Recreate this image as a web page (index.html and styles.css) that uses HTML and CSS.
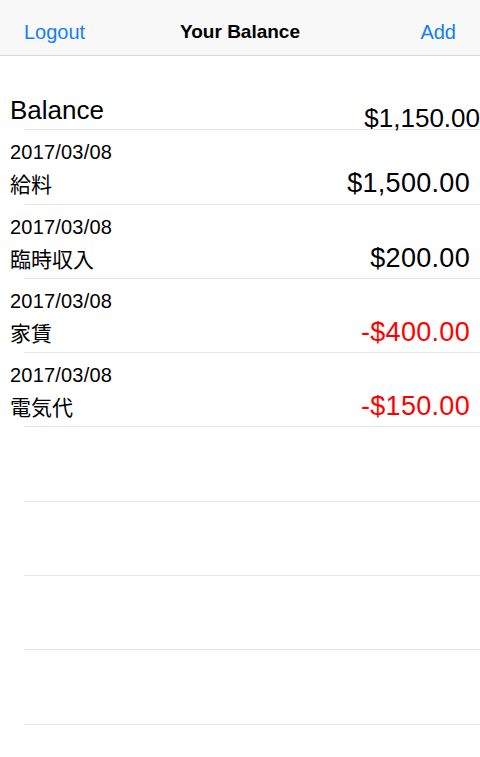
FILE: index.html
```html
<!DOCTYPE html>
<html lang="ja">
<head>
    <meta charset="UTF-8">
    <title>Your Balance</title>
    <link rel="stylesheet" href="styles.css">
</head>
<body>

<!-- Barra de navegação -->
<header class="navbar">
    <a class="nav-btn nav-left">Logout</a>
    <span class="nav-title">Your Balance</span>
    <a class="nav-btn nav-right">Add</a>
</header>

<!-- Lista -->
<div class="lista">
    <div class="linha linha-saldo">
        <span class="saldo-label">Balance</span>
        <span class="saldo-valor">$1,150.00</span>
    </div>

    <div class="linha">
        <div class="data">2017/03/08</div>
        <div class="detalhe">
            <span class="nome">給料</span>
            <span class="valor">$1,500.00</span>
        </div>
    </div>

    <div class="linha">
        <div class="data">2017/03/08</div>
        <div class="detalhe">
            <span class="nome">臨時収入</span>
            <span class="valor">$200.00</span>
        </div>
    </div>

    <div class="linha">
        <div class="data">2017/03/08</div>
        <div class="detalhe">
            <span class="nome">家賃</span>
            <span class="valor negativo">-$400.00</span>
        </div>
    </div>

    <div class="linha">
        <div class="data">2017/03/08</div>
        <div class="detalhe">
            <span class="nome">電気代</span>
            <span class="valor negativo">-$150.00</span>
        </div>
    </div>

    <!-- linhas vazias -->
    <div class="linha"></div>
    <div class="linha"></div>
    <div class="linha"></div>
    <div class="linha"></div>
</div>

</body>
</html>
```

FILE: styles.css
```css
* {
    box-sizing: border-box;
}

body {
    margin: 0;
    font-family: 'Liberation Sans', Arial, 'Noto Sans CJK JP', sans-serif;
    color: #000;
    background: white;
}

.navbar {
    height: 56px;
    padding-top: 20px;
    background: #f8f8f8;
    border-bottom: 1px solid #d9d9d9;
    display: grid;
    grid-template-columns: 1fr auto 1fr;
    align-items: start;
}

.nav-btn {
    color: #147efb;
    font-size: 20px;
    line-height: 24px;
}

.nav-left {
    padding-left: 24px;
}

.nav-right {
    text-align: right;
    padding-right: 24px;
}

.nav-title {
    font-size: 19px;
    font-weight: bold;
    line-height: 24px;
}

.linha {
    height: 74.3px;
    padding: 10px 10px 0 10px;
    background: linear-gradient(#e6e6e6, #e6e6e6) no-repeat;
    background-position: 24px 100%;
    background-size: calc(100% - 24px) 1px;
}

.linha-saldo {
    display: flex;
    justify-content: space-between;
    align-items: flex-start;
    padding: 0 0 0 10px;
}

.saldo-label {
    font-size: 26px;
    line-height: 30px;
    margin-top: 39px;
}

.saldo-valor {
    font-size: 26px;
    line-height: 30px;
    margin-top: 47px;
}

.data {
    font-size: 20px;
    line-height: 24px;
    letter-spacing: 0.2px;
}

.detalhe {
    display: flex;
    justify-content: space-between;
    align-items: baseline;
    margin-top: 3px;
    line-height: 32px;
}

.nome {
    font-family: 'Noto Sans CJK JP', sans-serif;
    font-size: 21px;
}

.valor {
    font-size: 27px;
    letter-spacing: 0.3px;
}

.negativo {
    color: #ff0000;
}
```
